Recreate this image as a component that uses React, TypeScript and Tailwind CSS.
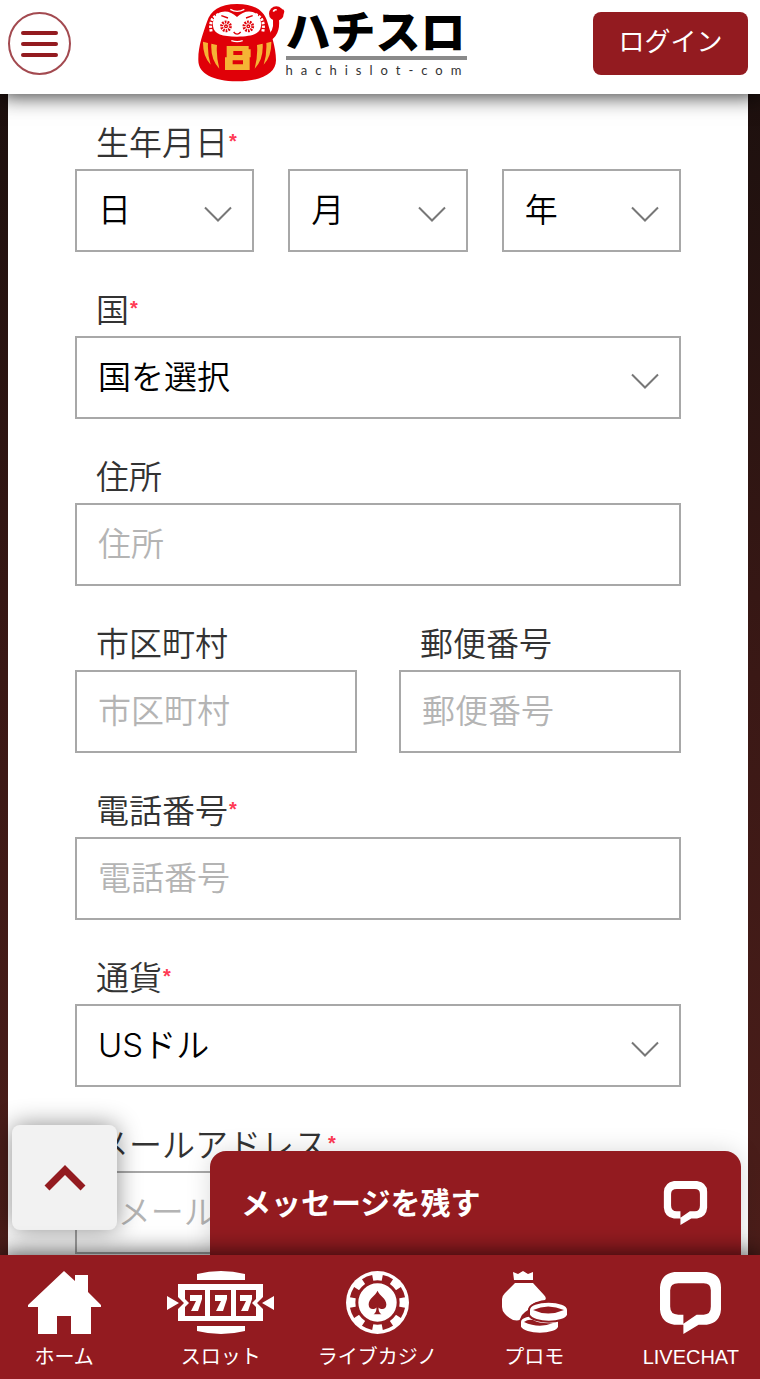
import { ReactNode } from "react";

const FONT = "font-['Inter','Noto_Sans_CJK_JP',sans-serif]";
const BOX =
    "w-full h-[83px] border-2 border-[#a8a8a8] bg-white pl-[21px] text-[33px] font-[350] rounded-none outline-none";

interface FieldProps {
    id: string;
    label: string;
    required?: boolean;
    children: ReactNode;
}

const Field = ({ id, label, required, children }: FieldProps) => (
    <div className="flex w-full min-w-0 flex-col gap-2">
        <label
            htmlFor={id}
            className="flex h-9 pl-[21px] text-[33px] leading-9 font-[350] text-[#333] whitespace-nowrap"
        >
            {label}
            {required && (
                <span className="pl-px font-['Liberation_Sans',sans-serif] text-[20px] leading-8 font-bold text-[#ff3b55]">
                    *
                </span>
            )}
        </label>
        {children}
    </div>
);

interface SelectProps {
    id: string;
    value: string;
    label?: string;
}

const Select = ({ id, value, label }: SelectProps) => (
    <div className="relative w-full min-w-0">
        <select
            id={id}
            aria-label={label}
            className={`${BOX} block appearance-none text-black`}
        >
            <option>{value}</option>
        </select>
        <svg
            className="pointer-events-none absolute top-[37px] right-[22px] h-4 w-7"
            viewBox="0 0 28 16"
            fill="none"
            stroke="#777"
            strokeWidth="2"
        >
            <path d="M1 1.5 14 14.5 27 1.5" />
        </svg>
    </div>
);

interface TextInputProps {
    id: string;
    placeholder: string;
    type?: string;
}

const TextInput = ({ id, placeholder, type = "text" }: TextInputProps) => (
    <input
        id={id}
        type={type}
        placeholder={placeholder}
        className={`${BOX} pb-[2px] placeholder:text-[#b4b4b4]`}
    />
);

const DarumaIcon = () => (
    <svg className="h-[80px] w-[89px] shrink-0" viewBox="25 8 267 240">
        <path
            d="M236 116c20-10 29-28 26-58"
            fill="none"
            stroke="#e00008"
            strokeWidth="18"
        />
        <circle cx="263" cy="40" r="22" fill="#e00008" />
        <circle cx="280" cy="34" r="7" fill="#e00008" />
        <path d="M254 34q3-8 10-5" fill="none" stroke="#fff" strokeWidth="5" />
        <path
            d="M145 11C92 11 66 31 55 64 43 99 28 138 29 180c0 40 44 63 116 63s117-23 117-63c0-42-16-80-26-116-11-34-38-53-91-53Z"
            fill="#e00008"
        />
        <path
            d="M145 50c-14-14-32-20-47-15-20 6-27 25-25 43 3 24 28 31 72 31s69-7 72-31c2-18-5-37-25-43-15-5-33 1-47 15Z"
            fill="#fff"
        />
        <g fill="none" stroke="#e00008">
            <g strokeWidth="9" strokeDasharray="5 3">
                <circle cx="112" cy="78" r="13" />
                <circle cx="179" cy="78" r="13" />
            </g>
            <g strokeWidth="4">
                <circle cx="112" cy="78" r="4" />
                <circle cx="179" cy="78" r="4" />
                <path d="M135 95q10 13 21 0M98 46l20 7M192 46l-20 7" />
            </g>
        </g>
        <path
            d="M90 42c-22 9-28 28-22 54M200 42c22 9 28 28 22 54"
            fill="none"
            stroke="#fff"
            strokeWidth="9"
            strokeDasharray="7 4"
        />
        <path
            d="M125 27q20 12 42 0M128 121q18 6 34 0"
            fill="none"
            stroke="#fff"
            strokeWidth="4"
        />
        <g fill="#f5b335">
            <path d="M43 124l15 4q-2 33 8 65Q42 169 43 124ZM68 130l17 4q-3 34 7 71-27-27-24-75ZM248 124l-15 4q2 33-8 65 24-24 23-69ZM222 130l-17 4q3 34-7 71 27-27 24-75Z" />
            <path d="M114 137h66v10h6v24h-3v38h-74v-38h5Z" />
        </g>
        <path d="M134 152h27v12h-27ZM132 180h31v12h-31Z" fill="#e00008" />
    </svg>
);

const ChatIcon = ({ className }: { className: string }) => (
    <svg className={className} viewBox="0 0 60 61">
        <path
            fillRule="evenodd"
            fill="#fff"
            d="M14 0H46Q60 2 60 15V37Q59 50 46 52H38L23 61V52H14Q1 50 0 37V15Q1 2 14 0ZM18 11Q10 11 10 18V34Q10 42 18 42H23V51L36 42H43Q50 42 50 34V18Q50 11 43 11Z"
        />
    </svg>
);

const HomeIcon = () => (
    <svg className="h-[63px] w-[73px]" viewBox="0 0 73 63" fill="#fff">
        <path d="M36 0 47 10V4H60V21L73 34V36H63V63H43V45H29V63H10V36H0V34Z" />
    </svg>
);

const SlotIcon = () => (
    <svg className="h-[63px] w-[107px]" viewBox="0 0 107 63">
        <path
            fill="#fff"
            d="M30 3Q54-3 78 3V9H30ZM30 55H78V60Q54 66 30 60ZM0 25 12 32 0 39ZM107 25 95 32 107 39Z"
        />
        <path
            fill="#fff"
            fillRule="evenodd"
            d="M11 13H96V26L90 32 96 38V50H11V38L17 32 11 26ZM18 19V28L22 32 18 36V45H38V19ZM43 19V45H64V19ZM69 19V45H89V36L85 32 89 28V19Z"
        />
        <g fill="#fff">
            <path d="M23 24H35V28L31 40H24L29 30H23Z" />
            <path d="M48 24H60V28L56 40H49L54 30H48Z" />
            <path d="M73 24H85V28L81 40H74L79 30H73Z" />
        </g>
    </svg>
);

const ChipIcon = () => (
    <svg className="h-[63px] w-[63px]" viewBox="0 0 64 64">
        <circle cx="32" cy="32" r="32" fill="#fff" />
        <circle
            cx="32"
            cy="32"
            r="25"
            fill="none"
            stroke="#931b20"
            strokeWidth="7"
            pathLength="80"
            strokeDasharray="5 5"
            strokeDashoffset="-2.5"
        />
        <circle
            cx="32"
            cy="32"
            r="21"
            fill="none"
            stroke="#931b20"
            strokeWidth="3"
        />
        <path
            fill="#931b20"
            d="M32 20C34 25 41 28 41 34 41 39 36 40 33 37Q33 42 36 44H28Q31 42 31 37C28 40 23 39 23 34 23 28 30 25 32 20Z"
        />
    </svg>
);

const PromoIcon = () => (
    <svg className="h-[63px] w-[65px]" viewBox="0 0 65 63">
        <path
            fill="#fff"
            d="M11 1 16 3 21 0 26 3 31 1V9H12ZM13 12H31L42 24Q45 27 43 29 28 31 26 39 19 43 18 49 10 51 3 43 0 40 0 36V28Q0 25 3 22Z"
        />
        <g fill="#fff" stroke="#931b20" strokeWidth="2">
            <path d="M18 51C18 41 57 41 57 51V56C54 65 22 65 18 56Z" />
            <path d="M27 39C27 28 66 28 66 39V44C63 53 31 53 27 44Z" />
        </g>
        <path
            fill="#931b20"
            d="M31 39Q46 32 62 39 46 46 31 39ZM22 51Q26 48 31 49 38 53 51 52 37 58 22 51Z"
        />
    </svg>
);

const NAV_ITEMS = [
    { label: "ホーム", icon: <HomeIcon /> },
    { label: "スロット", icon: <SlotIcon /> },
    { label: "ライブカジノ", icon: <ChipIcon /> },
    { label: "プロモ", icon: <PromoIcon /> },
    { label: "LIVECHAT", icon: <ChatIcon className="h-[62px] w-[61px]" /> }
];

const Header = () => (
    <header className="relative z-20 flex h-[94px] items-start justify-between bg-white pt-3 pr-3 pl-2 shadow-[0_2px_20px_rgba(0,0,0,0.8)]">
        <button
            type="button"
            aria-label="メニュー"
            className="flex h-[63px] w-[63px] flex-col items-center justify-center gap-[7px] rounded-full border-2 border-[#a34a50]"
        >
            <span className="h-1 w-[37px] rounded-sm bg-[#931b20]" />
            <span className="h-1 w-[37px] rounded-sm bg-[#931b20]" />
            <span className="h-1 w-[37px] rounded-sm bg-[#931b20]" />
        </button>
        <a href="#" className="-mt-[9px] ml-[2px] flex items-start">
            <DarumaIcon />
            <span className="flex flex-col">
                <span className="pt-2 font-['Liberation_Sans','Noto_Sans_CJK_JP',sans-serif] text-[45px] leading-[45px] font-black text-black">
                    ハチスロ
                </span>
                <span className="h-1 w-[181px] bg-[#8a8a8a]" />
                <span className="font-['Lato',sans-serif] text-[13px] leading-5 tracking-[8px] whitespace-nowrap text-[#333]">
                    hachislot-com
                </span>
            </span>
        </a>
        <button
            type="button"
            className="h-[63px] w-[155px] rounded-lg bg-[#931b20] pb-1 text-[26px] text-white"
        >
            ログイン
        </button>
    </header>
);

const RegisterForm = () => (
    <form className="mr-3 ml-2 flex flex-1 flex-col gap-10 bg-white px-[67px] pt-[31px]">
        <Field id="day" label="生年月日" required>
            <div className="flex gap-[34px]">
                <Select id="day" value="日" />
                <Select id="month" value="月" label="月" />
                <Select id="year" value="年" label="年" />
            </div>
        </Field>
        <Field id="country" label="国" required>
            <Select id="country" value="国を選択" />
        </Field>
        <Field id="address" label="住所">
            <TextInput id="address" placeholder="住所" />
        </Field>
        <div className="flex gap-[42px]">
            <Field id="city" label="市区町村">
                <TextInput id="city" placeholder="市区町村" />
            </Field>
            <Field id="zip" label="郵便番号">
                <TextInput id="zip" placeholder="郵便番号" />
            </Field>
        </div>
        <Field id="phone" label="電話番号" required>
            <TextInput id="phone" type="tel" placeholder="電話番号" />
        </Field>
        <Field id="currency" label="通貨" required>
            <Select id="currency" value="USドル" />
        </Field>
        <Field id="email" label="メールアドレス" required>
            <TextInput id="email" type="email" placeholder="Eメールアドレス" />
        </Field>
    </form>
);

const BottomNav = () => (
    <nav className="relative z-20 flex h-[124px] justify-between bg-[#931b20] pt-4 pr-[5px] shadow-[0_-2px_22px_rgba(0,0,0,0.7)]">
        {NAV_ITEMS.map(({ label, icon }) => (
            <a
                key={label}
                href="#"
                className="flex w-[17%] flex-col items-center gap-[9px] font-['Liberation_Sans','Noto_Sans_CJK_JP',sans-serif] text-[20px] leading-7 whitespace-nowrap text-white"
            >
                <span className="flex h-[63px] items-center">{icon}</span>
                {label}
            </a>
        ))}
    </nav>
);

const App = () => (
    <div className={`flex min-h-screen flex-col ${FONT}`}>
        <Header />
        <main className="relative flex flex-1 flex-col bg-linear-to-b from-[#1d100e] via-[#3a1815] to-[#4c1e1a]">
            <RegisterForm />
            <button
                type="button"
                aria-label="トップへ戻る"
                className="absolute bottom-[25px] left-3 z-10 flex h-[105px] w-[105px] items-center justify-center rounded-lg bg-[#f2f2f2] shadow-[0_0_24px_rgba(0,0,0,0.45)]"
            >
                <svg
                    className="h-[26px] w-[42px]"
                    viewBox="0 0 42 26"
                    fill="none"
                    stroke="#931b20"
                    strokeWidth="7"
                >
                    <path d="M3 23 21 5 39 23" />
                </svg>
            </button>
            <button
                type="button"
                className="absolute right-[19px] bottom-0 left-[210px] z-10 flex h-[104px] items-center justify-between rounded-t-2xl bg-[#931b20] pr-[33px] pl-[31px] text-[30px] font-bold text-white shadow-[0_0_24px_rgba(0,0,0,0.15)]"
            >
                メッセージを残す
                <ChatIcon className="h-[44px] w-[45px]" />
            </button>
        </main>
        <BottomNav />
    </div>
);

export default App;
